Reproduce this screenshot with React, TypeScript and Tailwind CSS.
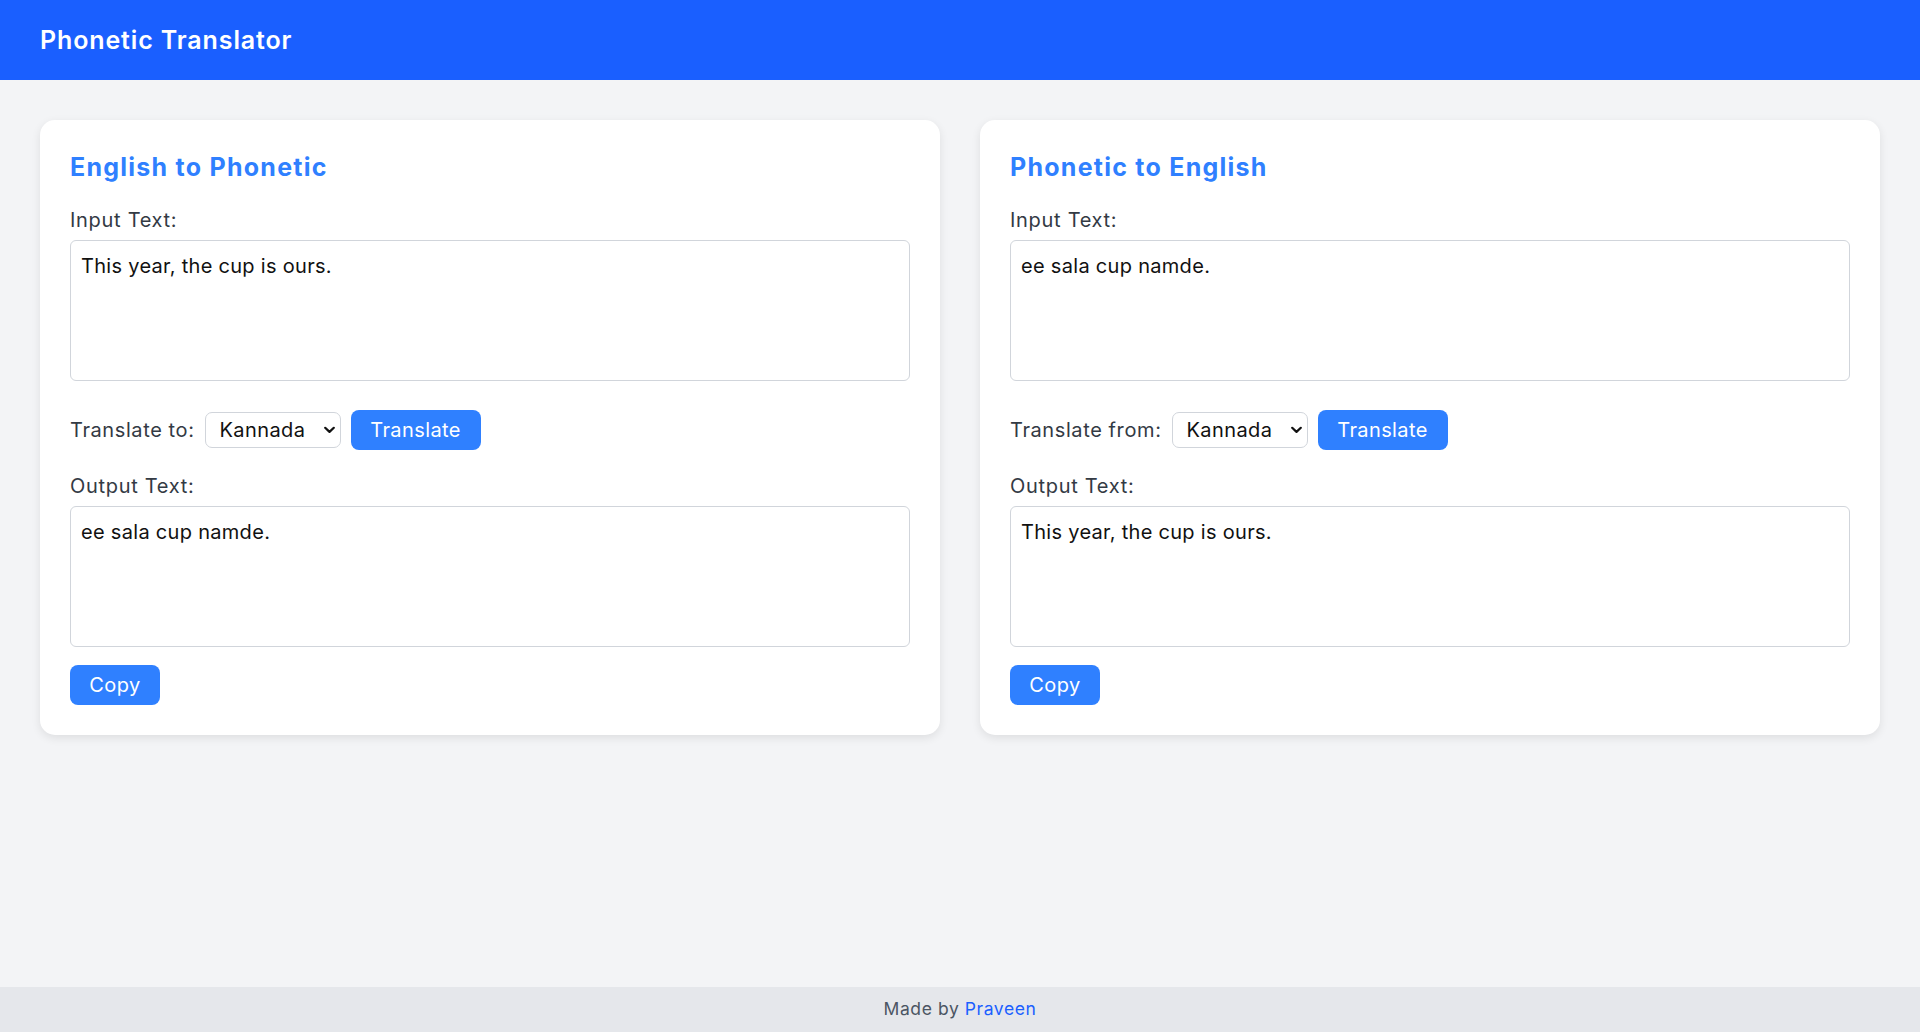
import React from "react";

const font = { fontFamily: "Inter, 'Open Sans', sans-serif" };

function Chevron() {
  return (
    <svg
      width="11"
      height="7"
      viewBox="0 0 11 7"
      className="pointer-events-none absolute right-[6px] top-1/2 -translate-y-1/2"
    >
      <path d="M1.2 1.2 L5.5 5.4 L9.8 1.2" fill="none" stroke="#111" strokeWidth="2.2" strokeLinecap="round" strokeLinejoin="round" />
    </svg>
  );
}

function Card({
  title,
  input,
  output,
  label,
}: {
  title: string;
  input: string;
  output: string;
  label: string;
}) {
  return (
    <div className="flex flex-col rounded-[15px] bg-white px-[30px] pb-[30px] pt-[30px] shadow-[0_3px_10px_rgba(0,0,0,0.09)]">
      <h2 className="text-[25px] font-bold leading-[34px] tracking-[0.05em] text-[#2f80ff]">{title}</h2>
      <label className="mt-[21px] text-[20px] leading-[30px] tracking-[0.035em] text-[#333a44]">Input Text:</label>
      <textarea
        defaultValue={input}
        className="mt-[5px] h-[141px] w-full resize-none rounded-[6px] border border-[#d1d5db] px-[10px] py-[10px] text-[20px] leading-[30px] tracking-[0.015em] text-[#111] outline-none"
        style={font}
      />
      <div className="mt-[29px] flex h-[40px] items-center gap-[10px]">
        <span className="text-[20px] leading-[30px] tracking-[0.03em] text-[#333a44]">{label}</span>
        <div className="relative h-[36px] w-[136px]">
          <select
            defaultValue="kn"
            className="h-full w-full appearance-none rounded-[7px] border border-[#d1d5db] bg-white pl-[14px] text-[20px] tracking-[0.02em] text-[#111] outline-none"
            style={font}
          >
            <option value="kn">Kannada</option>
          </select>
          <Chevron />
        </div>
        <button className="h-[40px] w-[130px] rounded-[8px] bg-[#2f80ff] text-[20px] tracking-[0.02em] text-white">Translate</button>
      </div>
      <label className="mt-[21px] text-[20px] leading-[30px] tracking-[0.035em] text-[#333a44]">Output Text:</label>
      <textarea
        defaultValue={output}
        className="mt-[5px] h-[141px] w-full resize-none rounded-[6px] border border-[#d1d5db] px-[10px] py-[10px] text-[20px] leading-[30px] tracking-[0.015em] text-[#111] outline-none"
        style={font}
      />
      <div className="mt-[18px]">
        <button className="h-[40px] w-[90px] rounded-[8px] bg-[#2f80ff] text-[20px] tracking-[0.02em] text-white">Copy</button>
      </div>
    </div>
  );
}

export default function App() {
  return (
    <div className="flex h-screen flex-col bg-[#f3f4f6]" style={font}>
      <header className="flex h-[80px] shrink-0 items-center bg-[#1a5fff] px-[40px]">
        <h1 className="text-[25px] font-semibold leading-none tracking-[0.035em] text-white">Phonetic Translator</h1>
      </header>
      <main className="flex-1 p-[40px]">
        <div className="grid grid-cols-2 items-start gap-[40px]">
          <Card
            title="English to Phonetic"
            input="This year, the cup is ours."
            output="ee sala cup namde."
            label="Translate to:"
          />
          <Card
            title="Phonetic to English"
            input="ee sala cup namde."
            output="This year, the cup is ours."
            label="Translate from:"
          />
        </div>
      </main>
      <footer className="flex h-[45px] shrink-0 items-center justify-center bg-[#e5e7eb] text-[17.5px] tracking-[0.033em] text-[#4b5563]">
        <span>
          Made by <a className="text-[#1a5fff]">Praveen</a>
        </span>
      </footer>
    </div>
  );
}
